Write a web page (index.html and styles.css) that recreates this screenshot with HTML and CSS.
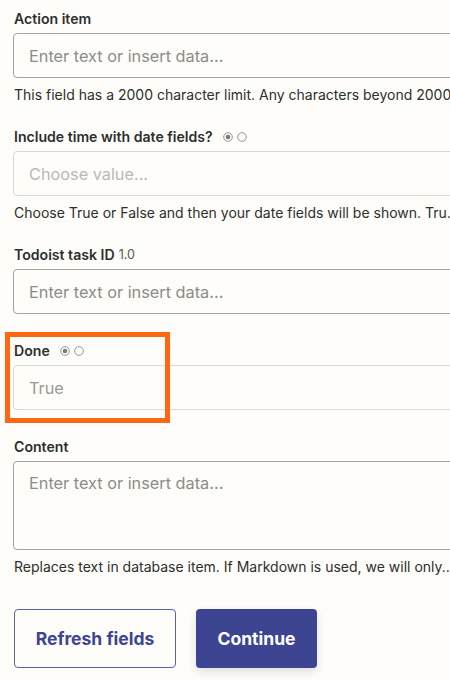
FILE: index.html
```html
<!DOCTYPE html>
<html>
<head>
<meta charset="utf-8">
<link rel="stylesheet" href="styles.css">
</head>
<body>
<div class="form">
  <div class="field">
    <div class="label">Action item</div>
    <div class="input dark"><span class="ph">Enter text or insert data...</span></div>
    <div class="help">This field has a 2000 character limit. Any characters beyond 2000</div>
  </div>

  <div class="field">
    <div class="label">Include time with date fields?
      <span class="radios">
        <svg width="10" height="10" viewBox="0 0 10 10"><circle cx="5" cy="5" r="4.3" fill="none" stroke="#8a8a8a" stroke-width="0.9"/><circle cx="5" cy="5" r="2.3" fill="#7a7a7a"/></svg>
        <svg width="10" height="10" viewBox="0 0 10 10"><circle cx="5" cy="5" r="4.3" fill="none" stroke="#8a8a8a" stroke-width="0.9"/></svg>
      </span>
    </div>
    <div class="input light"><span class="ph faint">Choose value...</span></div>
    <div class="help">Choose True or False and then your date fields will be shown. Tru.</div>
  </div>

  <div class="field nohelp">
    <div class="label">Todoist task ID <span class="ver">1.0</span></div>
    <div class="input dark"><span class="ph">Enter text or insert data...</span></div>
  </div>

  <div class="field nohelp">
    <div class="label">Done
      <span class="radios">
        <svg width="10" height="10" viewBox="0 0 10 10"><circle cx="5" cy="5" r="4.3" fill="none" stroke="#8a8a8a" stroke-width="0.9"/><circle cx="5" cy="5" r="2.3" fill="#7a7a7a"/></svg>
        <svg width="10" height="10" viewBox="0 0 10 10"><circle cx="5" cy="5" r="4.3" fill="none" stroke="#8a8a8a" stroke-width="0.9"/></svg>
      </span>
    </div>
    <div class="input light"><span class="ph mid">True</span></div>
    <div class="mark"></div>
  </div>

  <div class="field">
    <div class="label">Content</div>
    <div class="input dark area"><span class="ph">Enter text or insert data...</span></div>
    <div class="help">Replaces text in database item. If Markdown is used, we will only..</div>
  </div>

  <div class="buttons">
    <button class="btn outline">Refresh fields</button>
    <button class="btn primary">Continue</button>
  </div>
</div>
</body>
</html>
```

FILE: styles.css
```css
html, body {
  margin: 0;
  padding: 0;
  background: #fffdf9;
  overflow: hidden;
}
body {
  font-family: Inter, "Liberation Sans", sans-serif;
  color: #2d2e2e;
  width: 450px;
  height: 680px;
}
.form {
  padding: 9px 0 0 14px;
}
.field {
  position: relative;
  margin-bottom: 22px;
}
.field.nohelp {
  margin-bottom: 27px;
}
.label {
  font-size: 14.1px;
  font-weight: 600;
  line-height: 20px;
  height: 20px;
  margin-bottom: 4px;
  display: flex;
  align-items: center;
  white-space: nowrap;
}
.ver {
  font-size: 12.5px;
  font-weight: 400;
  color: #555;
  margin-left: 4px;
}
.radios {
  display: inline-flex;
  gap: 4px;
  margin-left: 10px;
  align-items: center;
}
.radios svg { display: block; }
.input {
  box-sizing: border-box;
  margin-left: -1px;
  width: 460px;
  height: 45px;
  border-radius: 4px;
  display: flex;
  align-items: center;
  padding-left: 15px;
  background: #fffdf9;
}
.input.dark { border: 1px solid #a3a3a0; }
.input.light { border: 1px solid #d9d8d4; }
.input.area {
  height: 89px;
  align-items: flex-start;
  padding-top: 11px;
}
.ph {
  font-size: 16.3px;
  color: #8c8c8a;
  white-space: nowrap;
}
.ph.faint { color: #b9b8b5; }
.ph.mid { color: #9a9996; }
.help {
  margin-top: 7px;
  font-size: 14px;
  line-height: 20px;
  white-space: nowrap;
  color: #2d2e2e;
}
.mark {
  position: absolute;
  left: -9px;
  top: -9px;
  width: 155px;
  height: 81px;
  border: 5px solid #ff6612;
  pointer-events: none;
}
.buttons {
  display: flex;
  gap: 20px;
  margin-top: 32px;
}
.btn {
  font-family: Inter, "Liberation Sans", sans-serif;
  font-size: 17.5px;
  font-weight: 700;
  height: 59px;
  border-radius: 4px;
  cursor: pointer;
}
.btn.outline {
  width: 162px;
  background: #fffdf9;
  color: #3d4592;
  border: 1px solid #5a62a8;
}
.btn.primary {
  width: 121px;
  background: #3d4592;
  color: #fff;
  border: none;
  box-shadow: 0 4px 10px rgba(0,0,0,0.12);
}
```
